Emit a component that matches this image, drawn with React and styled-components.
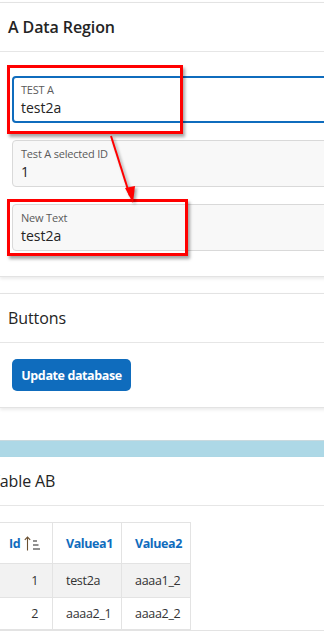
import React from 'react'
import styled, { createGlobalStyle } from 'styled-components'

const GlobalStyle = createGlobalStyle`
  html, body {
    margin: 0;
    padding: 0;
    overflow: hidden;
    background: #fff;
  }
  body {
    font-family: "Open Sans", "Noto Sans", Arial, sans-serif;
    color: #242424;
  }
`

const Page = styled.div`
  position: relative;
  width: 420px;
  padding-top: 2px;
`

const Card = styled.section`
  background: #fff;
  border-top: ${props => (props.flat ? 'none' : '1px solid #e3e3e3')};
  border-bottom: 1px solid #e3e3e3;
  box-shadow: 0 2px 3px rgba(0, 0, 0, 0.08);
  margin-bottom: ${props => props.gap || 0}px;
  margin-left: ${props => props.shift || 0}px;
`

const CardHeader = styled.header`
  height: 48px;
  display: flex;
  align-items: center;
  padding: 0 8px;
  border-bottom: 1px solid #e6e6e6;
  font-size: 16px;
  font-weight: ${props => props.weight || 500};
  letter-spacing: -0.1px;
`

const CardBody = styled.div`
  display: flex;
  flex-direction: column;
  align-items: flex-start;
  gap: 17px;
  padding: ${props => props.pad || '24px 12px 25px'};
`

const Field = styled.div`
  box-sizing: border-box;
  width: 100%;
  height: 47px;
  padding: ${props => (props.focused ? '4px 7px' : '5px 8px')};
  border: ${props => (props.focused ? '2px solid #0f6cbd' : '1px solid #d9d9d9')};
  border-radius: 4px;
  background: ${props => (props.focused ? '#fff' : '#f8f8f8')};
`

const FieldLabel = styled.div`
  font-size: 11px;
  line-height: 16px;
  color: #5a5a5a;
  letter-spacing: -0.2px;
`

const FieldValue = styled.div`
  font-size: 14px;
  line-height: 20px;
  color: #242424;
`

const Button = styled.button`
  height: 32px;
  width: 119px;
  border: none;
  border-radius: 5px;
  background: #0f6cbd;
  color: #fff;
  font-family: inherit;
  font-size: 12.5px;
  font-weight: 700;
  letter-spacing: -0.4px;
  padding: 0;
  cursor: pointer;
`

const Band = styled.div`
  height: 16px;
  border-top: 1px solid #c9d9de;
  background: #add8e6;
  margin-top: 32px;
`

const Table = styled.table`
  border-collapse: collapse;
  table-layout: fixed;
  width: 195px;
  font-size: 12.5px;
  margin: 0 0 0 12px;
`

const Th = styled.th`
  height: 40px;
  padding: 0 0 0 13px;
  border: 1px solid #e3e3e3;
  text-align: left;
  color: #0f6cbd;
  font-weight: 700;
  white-space: nowrap;
  letter-spacing: -0.4px;
`

const Row = styled.tr`
  background: ${props => (props.shade ? '#f2f2f2' : '#fff')};
`

const Td = styled.td`
  height: ${props => props.h || 33}px;
  padding: ${props => (props.num ? '0 14px 0 0' : '0 0 0 13px')};
  border: 1px solid #e3e3e3;
  text-align: ${props => (props.num ? 'right' : 'left')};
  color: #333;
  letter-spacing: -0.3px;
  white-space: nowrap;
`

const SortIcon = styled.svg`
  vertical-align: -3px;
  margin-left: 4px;
`

const Callout = styled.div`
  position: absolute;
  left: ${props => props.x}px;
  top: ${props => props.y}px;
  width: ${props => props.w}px;
  height: ${props => props.h}px;
  box-sizing: border-box;
  border: 3px solid #ff0000;
  box-shadow: 2px 3px 3px rgba(0, 0, 0, 0.35);
  pointer-events: none;
`

const Arrow = styled.svg`
  position: absolute;
  left: 100px;
  top: 130px;
  overflow: visible;
  filter: drop-shadow(2px 2px 1.5px rgba(0, 0, 0, 0.35));
  pointer-events: none;
`

const rows = [
  { id: 1, a: 'test2a', b: 'aaaa1_2', shade: true, h: 33 },
  { id: 2, a: 'aaaa2_1', b: 'aaaa2_2', shade: false, h: 31 },
]

export default function App() {
  return (
    <Page>
      <GlobalStyle />

      <Card gap={16}>
        <CardHeader weight={600}>A Data Region</CardHeader>
        <CardBody>
          <Field focused>
            <FieldLabel>TEST A</FieldLabel>
            <FieldValue>test2a</FieldValue>
          </Field>
          <Field>
            <FieldLabel>Test A selected ID</FieldLabel>
            <FieldValue>1</FieldValue>
          </Field>
          <Field>
            <FieldLabel>New Text</FieldLabel>
            <FieldValue>test2a</FieldValue>
          </Field>
        </CardBody>
      </Card>

      <Card>
        <CardHeader>Buttons</CardHeader>
        <CardBody pad="16px 12px 16px">
          <Button>Update database</Button>
        </CardBody>
      </Card>

      <Band />

      <Card shift={-17} flat>
        <CardHeader>Table AB</CardHeader>
        <CardBody pad="16px 0 0">
          <Table>
            <colgroup>
              <col style={{ width: 57 }} />
              <col style={{ width: 69 }} />
              <col style={{ width: 69 }} />
            </colgroup>
            <thead>
              <tr>
                <Th>
                  Id
                  <SortIcon width="17" height="15" viewBox="0 0 17 15">
                    <path d="M3.5 14.5V1M0.8 3.8L3.5 1l2.7 2.8" fill="none" stroke="#6b5030" strokeWidth="1.1" />
                    <path d="M9 5h4M9 9h5.5M9 13h7" stroke="#222" strokeWidth="1.1" />
                  </SortIcon>
                </Th>
                <Th>Valuea1</Th>
                <Th>Valuea2</Th>
              </tr>
            </thead>
            <tbody>
              {rows.map(r => (
                <Row key={r.id} shade={r.shade}>
                  <Td num h={r.h}>{r.id}</Td>
                  <Td h={r.h}>{r.a}</Td>
                  <Td h={r.h}>{r.b}</Td>
                </Row>
              ))}
            </tbody>
          </Table>
        </CardBody>
      </Card>

      <Callout x={7} y={65} w={176} h={69} />
      <Callout x={7} y={199} w={181} h={57} />
      <Arrow width="40" height="80" viewBox="0 0 40 80">
        <line x1="11" y1="6" x2="30" y2="66" stroke="#ff0000" strokeWidth="2" />
        <polygon points="25,58 35,56 33,73" fill="#ff0000" />
      </Arrow>
    </Page>
  )
}
